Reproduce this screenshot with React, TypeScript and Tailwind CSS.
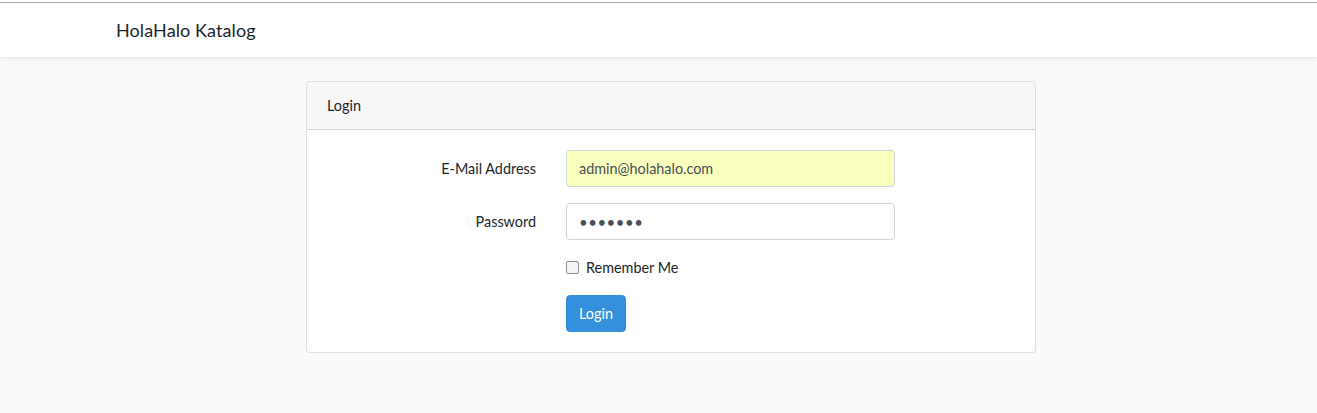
import React from "react";

export default function App() {
  return (
    <div className="min-h-[413px] bg-[#f8fafc] text-[#212529] text-[14.4px] leading-[1.6]" style={{ fontFamily: "Lato, 'Noto Sans', sans-serif" }}>
      <div className="h-[2px] bg-white" />
      <div className="h-px bg-[#a9a9a9]" />
      <nav className="bg-white h-[54px] flex items-center pl-[116px] shadow-[0_2px_4px_rgba(0,0,0,0.075)]">
        <span className="text-[18px] leading-[1.6] tracking-[0.1px]">HolaHalo Katalog</span>
      </nav>
      <main className="pt-6 pl-[306px]">
        <div className="w-[730px] bg-white border border-[rgba(0,0,0,0.125)] rounded-[4px]">
          <div className="h-[48px] px-5 flex items-center bg-[#f7f7f7] border-b border-[rgba(0,0,0,0.125)] rounded-t-[4px]">
            Login
          </div>
          <div className="p-5 flex flex-col gap-4">
            <div className="flex items-center">
              <label className="w-[209px] text-right">E-Mail Address</label>
              <div className="ml-[30px] w-[329px] h-[37px] rounded-[4px] border border-[#ced4da] bg-[#faffbd] px-3 flex items-center text-[#495057]">
                admin@holahalo.com
              </div>
            </div>
            <div className="flex items-center">
              <label className="w-[209px] text-right">Password</label>
              <div className="ml-[30px] w-[329px] h-[37px] rounded-[4px] border border-[#ced4da] bg-white px-3 flex items-center text-[#495057] tracking-[0.5px]">
                <span className="text-[15px]">•••••••</span>
              </div>
            </div>
            <div className="flex items-center pl-[239px] h-[23px]">
              <span className="w-[13px] h-[13px] rounded-[2px] border border-[#8f8f8f] bg-[#f4f4f4]" />
              <span className="ml-[7px]">Remember Me</span>
            </div>
            <div className="pl-[239px]">
              <button className="h-[37px] px-3 rounded-[4px] bg-[#3490dc] border border-[#3490dc] text-white">Login</button>
            </div>
          </div>
        </div>
      </main>
    </div>
  );
}
